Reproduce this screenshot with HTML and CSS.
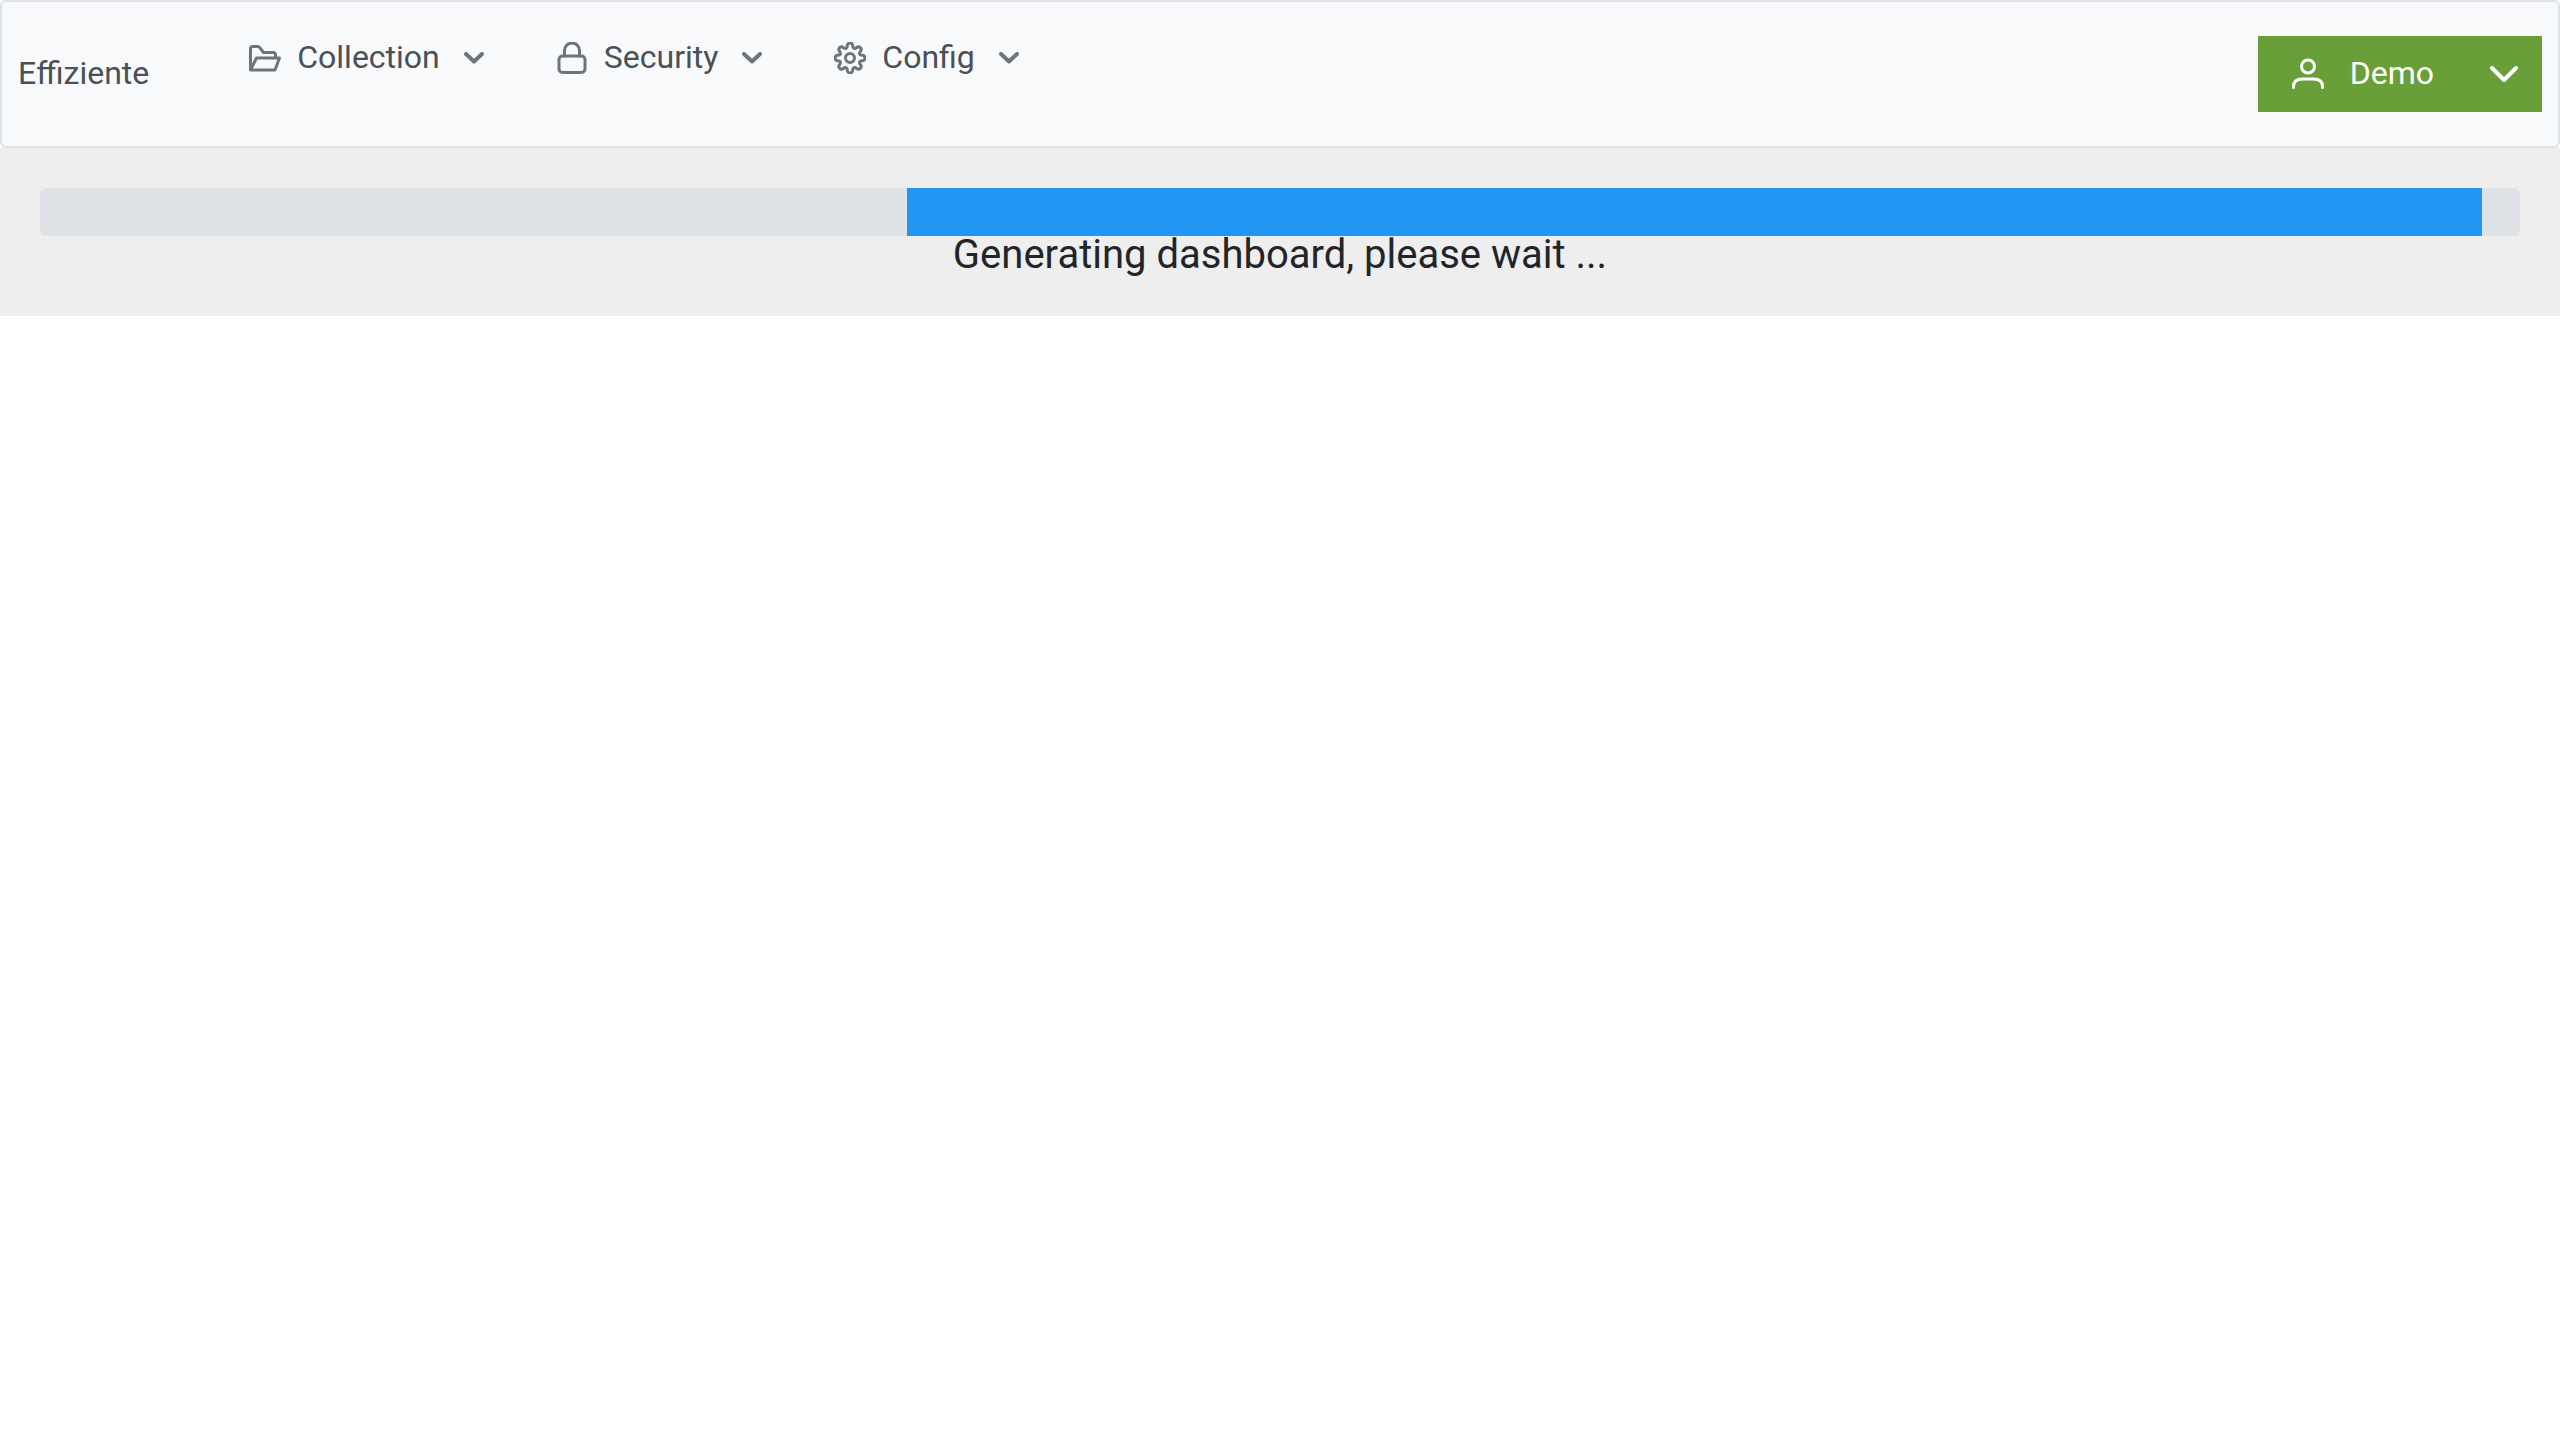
FILE: index.html
```html
<!DOCTYPE html>
<html lang="en">
<head>
<meta charset="utf-8">
<title>Effiziente</title>
<link rel="stylesheet" href="styles.css">
</head>
<body>
<header class="menubar">
  <a class="brand label" href="#">Effiziente</a>
  <nav class="menu" aria-label="Main">
    <button class="menu-item" type="button" aria-haspopup="true">
      <svg class="icon" viewBox="0 0 32 32" aria-hidden="true"><path d="M1.500 28V7Q1.500 4.500 4 4.500H8.500Q10 4.500 11 5.800L14.500 10.500H24Q26.500 10.500 26.500 13V16M1.500 28L7.500 16H30.500L26 28Z"/></svg>
      <span class="label">Collection</span>
      <svg class="caret" viewBox="0 0 20 12" aria-hidden="true"><path d="M2 2L10 9.500L18 2"/></svg>
    </button>
    <button class="menu-item" type="button" aria-haspopup="true">
      <svg class="icon" viewBox="0 0 32 32" aria-hidden="true"><rect x="3" y="14" width="26" height="16.500" rx="3.500"/><path d="M8.500 14V8.500A7.500 7.500 0 0 1 23.500 8.500V14"/></svg>
      <span class="label">Security</span>
      <svg class="caret" viewBox="0 0 20 12" aria-hidden="true"><path d="M2 2L10 9.500L18 2"/></svg>
    </button>
    <button class="menu-item" type="button" aria-haspopup="true">
      <svg class="icon" viewBox="0 0 32 32" aria-hidden="true"><circle cx="16" cy="16" r="4.500"/><path d="M13.300 3.700A2.700 2.700 0 0 1 18.700 3.700C18.700 6.600 20.600 7.300 22.700 5.500A2.700 2.700 0 0 1 26.500 9.300C24.700 11.400 25.400 13.300 28.300 13.300A2.700 2.700 0 0 1 28.300 18.700C25.400 18.700 24.700 20.600 26.500 22.700A2.700 2.700 0 0 1 22.700 26.500C20.600 24.700 18.700 25.400 18.700 28.300A2.700 2.700 0 0 1 13.300 28.300C13.300 25.400 11.400 24.700 9.300 26.500A2.700 2.700 0 0 1 5.500 22.700C7.300 20.600 6.600 18.700 3.700 18.700A2.700 2.700 0 0 1 3.700 13.300C6.600 13.300 7.300 11.400 5.500 9.300A2.700 2.700 0 0 1 9.300 5.500C11.400 7.300 13.300 6.600 13.300 3.700Z"/></svg>
      <span class="label">Config</span>
      <svg class="caret" viewBox="0 0 20 12" aria-hidden="true"><path d="M2 2L10 9.500L18 2"/></svg>
    </button>
  </nav>
  <div class="account">
    <button class="account-main" type="button">
      <svg class="icon" viewBox="0 0 32 32" aria-hidden="true"><circle cx="16" cy="8.500" r="6.500"/><path d="M1.500 29.500V28.500C1.500 23 5.500 21 10.500 21H21.500C26.500 21 30.500 23 30.500 28.500V29.500"/></svg>
      <span class="label">Demo</span>
    </button>
    <button class="account-toggle" type="button" aria-label="Account menu">
      <svg class="toggle-caret" viewBox="0 0 28 16" aria-hidden="true"><path d="M2 2L14 14L26 2"/></svg>
    </button>
  </div>
</header>
<main class="loading">
  <div class="progress" role="progressbar" aria-labelledby="loading-text">
    <div class="progress-value" style="margin-left: 34.960%; width: 63.510%"></div>
  </div>
  <p class="loading-text" id="loading-text">Generating dashboard, please wait ...</p>
</main>
</body>
</html>
```
FILE: styles.css
```css
* { box-sizing: border-box; }

body {
  margin: 0;
  background: #fff;
  color: #212529;
  font-family: Roboto, sans-serif;
  font-size: 32px;
}

button {
  margin: 0;
  border: 0;
  font: inherit;
  cursor: pointer;
}

svg {
  flex: none;
  fill: none;
  stroke: currentColor;
  stroke-width: 3;
  stroke-linecap: round;
  stroke-linejoin: round;
}

.menubar {
  display: flex;
  align-items: center;
  padding: 34px 16px;
  border: 2px solid #dee2e6;
  border-radius: 6px;
  background: #f8f9fa;
}

.label { padding-bottom: 2px; }

.brand {
  color: #495057;
  text-decoration: none;
}

.menu {
  display: flex;
  align-self: flex-start;
  margin-left: 64px;
}

.menu-item {
  display: flex;
  align-items: center;
  gap: 16px;
  height: 44px;
  padding: 0 36px;
  background: none;
  color: #495057;
}

.icon {
  width: 32px;
  height: 32px;
}

.caret {
  width: 20px;
  height: 12px;
  margin-left: 8px;
  stroke-width: 4;
}

.menu-item svg { color: #6c757d; }

.account {
  display: flex;
  height: 76px;
  margin-left: auto;
}

.account button {
  display: flex;
  align-items: center;
  background: #689f38;
  color: #fff;
}

.account-main {
  gap: 26px;
  padding: 0 32px 0 34px;
}

.account-toggle {
  justify-content: center;
  width: 76px;
  padding: 0;
}

.toggle-caret {
  width: 28px;
  height: 16px;
  stroke-width: 4;
}

.loading {
  padding: 40px;
  background: #eee;
}

.progress {
  height: 48px;
  overflow: hidden;
  border-radius: 6px;
  background: #dee2e6;
}

.progress-value {
  height: 100%;
  background: #2196f3;
}

.loading-text {
  margin: 0;
  padding-bottom: 2px;
  font-size: 40px;
  line-height: 38px;
  text-align: center;
}
```
